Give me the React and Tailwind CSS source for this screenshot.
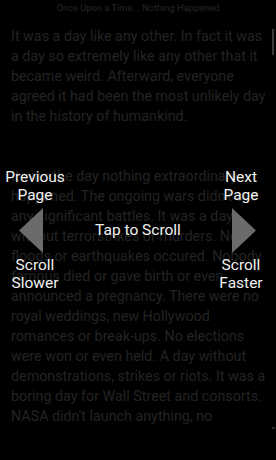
import React from 'react';

const primeiro = [
  'It was a day like any other. In fact it was',
  'a day so extremely like any other that it',
  'became weird. Afterward, everyone',
  'agreed it had been the most unlikely day',
  'in the history of humankind.',
];

const segundo = [
  'It was the day nothing extraordinary',
  "happened. The ongoing wars didn't see",
  'any significant battles. It was a day',
  'without terrorstrikes or murders. No',
  'floods or earthquakes occured. Nobody',
  'famous died or gave birth or even',
  'announced a pregnancy. There were no',
  'royal weddings, new Hollywood',
  'romances or break-ups. No elections',
  'were won or even held. A day without',
  'demonstrations, strikes or riots. It was a',
  'boring day for Wall Street and consorts.',
  "NASA didn't launch anything, no",
];

function Paragrafo({ linhas, className = '' }) {
  return (
    <p className={`text-[14.3px] leading-[20px] text-[#232323] ${className}`}>
      {linhas.map((linha) => (
        <span key={linha} className="block whitespace-nowrap">{linha}</span>
      ))}
    </p>
  );
}

function Rotulo({ children }) {
  return <p className="text-center text-[15.5px] leading-[18px] text-[#f2f2f2]">{children}</p>;
}

function Seta({ direita = false, className = '' }) {
  return (
    <svg className={className} width="24" height="45" viewBox="0 0 24 45">
      <polygon points={direita ? '0,0 0,45 24,22.5' : '24,0 24,45 0,22.5'} fill="#6b6b6b" />
    </svg>
  );
}

export default function App() {
  return (
    <div className="relative h-[460px] w-[276px] overflow-hidden bg-black font-['Roboto',sans-serif]">
      <div className="flex h-[20px] items-start justify-center pt-[2px]">
        <p className="text-[9.3px] leading-[12px] text-[#262626]">Once Upon a Time... Nothing Happened</p>
      </div>

      <div className="flex">
        <div className="flex-1 pl-[11px] pt-[6px]">
          <Paragrafo linhas={primeiro} />
          <Paragrafo linhas={segundo} className="mt-[40px]" />
        </div>
        <div className="flex w-[4px] flex-col pt-[9px]">
          <div className="h-[26px] w-[2px] bg-[#3a3a3a]" />
          <div className="mt-[372px] h-[2px] w-[3px] bg-[#2a2a2a]" />
        </div>
      </div>

      {/* controles sobrepostos ao texto */}
      <div className="absolute inset-0 flex items-start justify-between px-[4px] pt-[168px]">
        <div className="flex w-[62px] flex-col items-center">
          <Rotulo>Previous<br />Page</Rotulo>
          <Seta className="mt-[4px] -translate-x-[4px]" />
          <div className="mt-[3px]">
            <Rotulo>Scroll<br />Slower</Rotulo>
          </div>
        </div>
        <div className="flex-1 pt-[53px]">
          <Rotulo>Tap to Scroll</Rotulo>
        </div>
        <div className="flex w-[62px] flex-col items-center">
          <Rotulo>Next<br />Page</Rotulo>
          <Seta direita className="mt-[4px] translate-x-[3px]" />
          <div className="mt-[3px]">
            <Rotulo>Scroll<br />Faster</Rotulo>
          </div>
        </div>
      </div>
    </div>
  );
}
